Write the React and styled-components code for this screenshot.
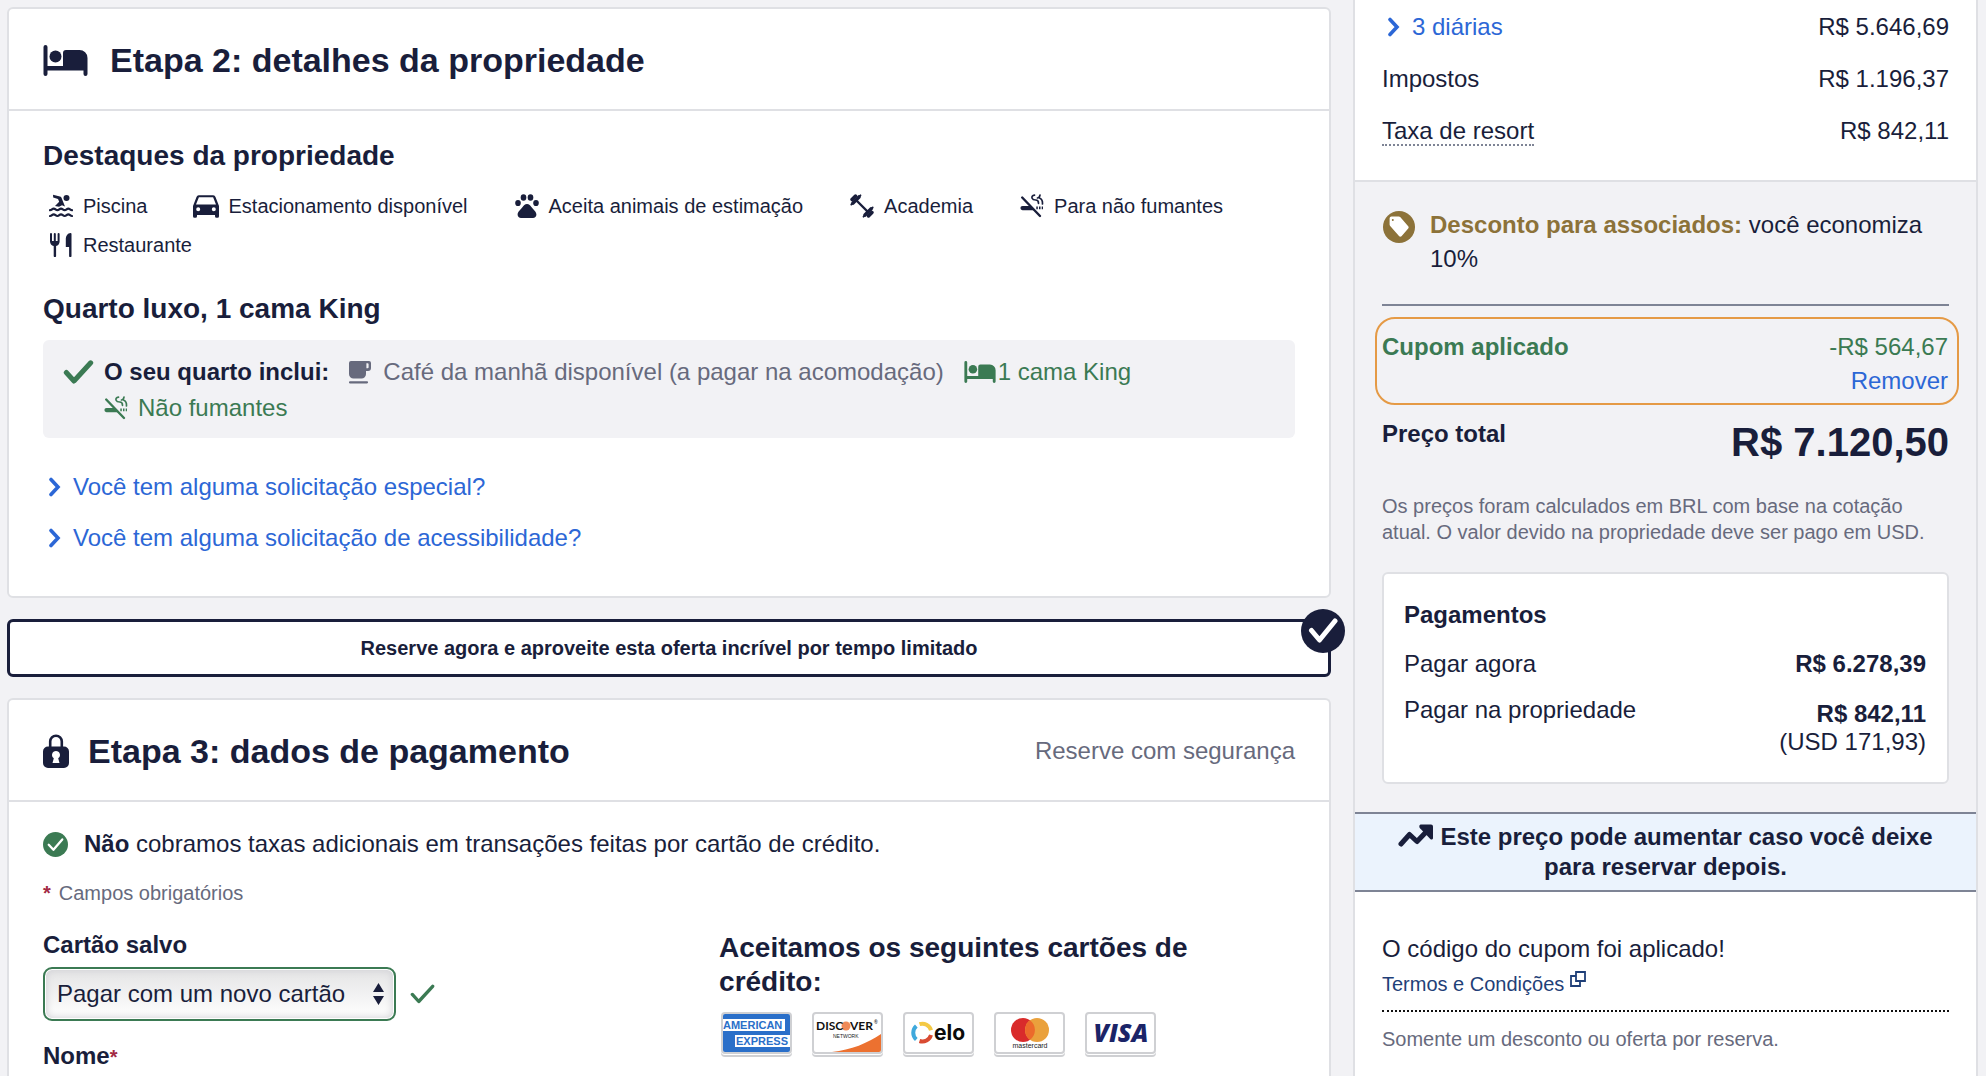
import React from 'react'
import styled, { createGlobalStyle } from 'styled-components'

const colors = {
    navy: '#191e3b',
    blue: '#2c67d6',
    link: '#1f3f78',
    green: '#3b7a53',
    gray: '#676a7d',
    gold: '#8c7239',
    red: '#a32a44',
    orange: '#e59a45',
    border: '#dfe0e4',
    rule: '#7e8495',
    bg: '#f2f2f5',
    white: '#fff',
}

const GlobalStyle = createGlobalStyle`
    *, *::before, *::after {
        box-sizing: border-box;
    }
    body {
        margin: 0;
        background: ${colors.bg};
        color: ${colors.navy};
        font-family: 'Liberation Sans', Arial, sans-serif;
        font-size: 24px;
        line-height: 30px;
    }
    h1, h2, h3, p, ul, dl, dd {
        margin: 0;
        padding: 0;
    }
`

/* ---------- icons ---------- */

const Svg = styled.svg`
    display: block;
    flex: none;
    fill: currentColor;
`

const BedIcon = ({ size = 44 }) => (
    <Svg width={size} height={Math.round(size * 0.7)} viewBox="0 0 44 31">
        <path d="M0 2a2 2 0 0 1 4 0v19h15.500V8a3 3 0 0 1 3-3H36a8 8 0 0 1 8 8v16a2 2 0 0 1-4 0v-3.500H4V29a2 2 0 0 1-4 0z" />
        <circle cx="12" cy="11.500" r="6" />
    </Svg>
)

const SwimIcon = () => (
    <Svg width="24" height="24" viewBox="0 0 24 24">
        <circle cx="17.500" cy="4" r="3" />
        <path d="M4 .8 11 2.600c1 .3 1.500 1 1.800 1.800L16 12.500l-3-1.300-3 1.500-4-.7 4.200-4.200L9 5 4.200 3.400z" />
        <g fill="none" stroke="currentColor" strokeWidth="2.200" strokeLinecap="round">
            <path d="M1 16.200c2 0 2-1.600 3.700-1.600s2 1.600 3.700 1.600 2-1.600 3.600-1.600 2 1.600 3.700 1.600 2-1.600 3.600-1.600 2 1.600 3.700 1.600" />
            <path d="M1 22c2 0 2-1.600 3.700-1.600S6.700 22 8.400 22s2-1.600 3.600-1.600 2 1.600 3.700 1.600 2-1.600 3.600-1.600S21.300 22 23 22" />
        </g>
    </Svg>
)

const CarIcon = () => (
    <Svg width="26" height="24" viewBox="0 0 26 24">
        <path
            fillRule="evenodd"
            d="M5.800 1.200h14.400a2.400 2.400 0 0 1 2.300 1.700L26 12v10.200a1.500 1.500 0 0 1-1.500 1.500h-1a1.500 1.500 0 0 1-1.500-1.500V21H4v1.200a1.500 1.500 0 0 1-1.500 1.500h-1A1.500 1.500 0 0 1 0 22.200V12l3.500-9.100a2.400 2.400 0 0 1 2.300-1.700zM5.900 3.300 3 10.500h20l-2.900-7.200zM5.200 13.300a2 2 0 1 0 0 4 2 2 0 0 0 0-4zm15.600 0a2 2 0 1 0 0 4 2 2 0 0 0 0-4z"
        />
    </Svg>
)

const PawIcon = () => (
    <Svg width="24" height="24" viewBox="0 0 24 24">
        <ellipse cx="3" cy="9" rx="2.800" ry="3.100" />
        <ellipse cx="8.500" cy="3.500" rx="2.800" ry="3.200" />
        <ellipse cx="15.500" cy="3.500" rx="2.800" ry="3.200" />
        <ellipse cx="21" cy="9" rx="2.800" ry="3.100" />
        <path d="M12 10c2.200 0 3.300 1.500 4.600 3.200 1.600 2.200 4.800 4.400 4.800 7.300 0 2.300-1.600 3.500-3.400 3.500H6c-1.800 0-3.400-1.200-3.400-3.500 0-2.900 3.200-5.100 4.800-7.300C8.700 11.500 9.800 10 12 10z" />
    </Svg>
)

const DumbbellIcon = () => (
    <Svg width="24" height="24" viewBox="0 0 24 24">
        <g fill="none" stroke="currentColor" strokeLinecap="round">
            <path strokeWidth="2.400" d="m6 6 12 12" />
            <path strokeWidth="3.600" d="m3 9 6-6M15 21l6-6" />
            <path strokeWidth="3.400" d="m2 5.500 3.500-3.500M18.500 22l3.500-3.500" />
            <path strokeWidth="1.800" d="M1.300 10.500 10.500 1.300M13.500 22.700l9.200-9.200" />
        </g>
    </Svg>
)

const NoSmokingIcon = () => (
    <Svg width="24" height="24" viewBox="0 0 24 24">
        <path d="M2.500 12h7.800l4.200 4.200h-12a2.100 2.100 0 0 1 0-4.200zM16.300 12.500h1.500v2.800h-1.500zM19 12.500h1.500v2.800H19zM21.700 12.500h1.300v2.800h-1.300z" />
        <g fill="none" stroke="currentColor" strokeLinecap="round">
            <path strokeWidth="2.400" d="M2.200 3.500 20 22" />
            <path strokeWidth="1.700" d="M14.500 1.200c-2.200.3-3 1.600-2.400 3 .6 1.500 2 1.800 3.600 1.800 2 0 2.800.9 2.800 3.300M20 1c-.2 1.800-1 2.700-2.500 3M19.500 4c2.300.8 3.200 2.500 3 6" />
        </g>
    </Svg>
)

const CutleryIcon = () => (
    <Svg width="24" height="24" viewBox="0 0 24 24">
        <path d="M1 1a1 1 0 0 1 2 0v7h1.800V1a1 1 0 0 1 2 0v7h1.800V1a1 1 0 0 1 2 0v7.500c0 2.300-1.500 4-3.500 4.500v10a1.200 1.200 0 0 1-2.400 0V13C2.500 12.500 1 10.800 1 8.500zM22.500 1v22a1.200 1.200 0 0 1-2.400 0v-9h-3.300V6c0-3 2-6 4.800-6a1 1 0 0 1 .9 1z" />
    </Svg>
)

const CupIcon = () => (
    <Svg width="22" height="24" viewBox="0 0 22 24">
        <path
            fillRule="evenodd"
            d="M0 3a2 2 0 0 1 2-2h18a2 2 0 0 1 2 2v5a3 3 0 0 1-3 3h-2v3a4.500 4.500 0 0 1-4.500 4.500h-8A4.500 4.500 0 0 1 0 14zM17.400 3.200v5h1.200a1 1 0 0 0 1-1v-3a1 1 0 0 0-1-1z"
        />
        <path d="M1 21.200h17a1 1 0 0 1 0 2.200H1a1 1 0 0 1 0-2.200z" />
    </Svg>
)

const CheckIcon = ({ width = 30, height = 24, stroke = 5 }) => (
    <Svg width={width} height={height} viewBox="0 0 30 24">
        <path
            d="m2.800 12.500 7.700 8.500L27.200 2.800"
            fill="none"
            stroke="currentColor"
            strokeWidth={stroke}
            strokeLinecap="round"
            strokeLinejoin="round"
        />
    </Svg>
)

const BadgeCheckIcon = () => (
    <Svg width="30" height="28" viewBox="0 0 30 28">
        <path
            d="m3.500 13.500 8 9.500L27 4"
            fill="none"
            stroke="currentColor"
            strokeWidth="5"
            strokeLinecap="round"
            strokeLinejoin="round"
        />
    </Svg>
)

const ChevronIcon = () => (
    <Svg width="14" height="20" viewBox="0 0 14 20">
        <path d="m3 2.500 7 7.500-7 7.500" fill="none" stroke="currentColor" strokeWidth="3.600" strokeLinecap="round" />
    </Svg>
)

const LockIcon = () => (
    <Svg width="26" height="35" viewBox="0 0 26 35">
        <path d="M7.200 14V7.500a5.800 5.800 0 0 1 11.600 0V14" fill="none" stroke="currentColor" strokeWidth="2.600" />
        <path
            fillRule="evenodd"
            d="M5 12.500h16a5 5 0 0 1 5 5V29a5 5 0 0 1-5 5H5a5 5 0 0 1-5-5V17.500a5 5 0 0 1 5-5zm8 4.500a4 4 0 0 0-2.200 7.300L9.500 29h7l-1.300-4.700A4 4 0 0 0 13 17z"
        />
    </Svg>
)

const CircleCheckIcon = ({ size }) => (
    <Svg width={size} height={size} viewBox="0 0 24 24">
        <circle cx="12" cy="12" r="12" />
        <path
            d="m5.500 12.300 4.500 4.800 8.500-10"
            fill="none"
            stroke={colors.white}
            strokeWidth="2.200"
            strokeLinecap="round"
            strokeLinejoin="round"
        />
    </Svg>
)

const TagIcon = () => (
    <Svg width="34" height="40" viewBox="0 0 34 40">
        <circle cx="17" cy="19" r="16" />
        <path
            fill={colors.white}
            fillRule="evenodd"
            d="M9.500 8.500h7.200c.6 0 1.100.2 1.500.6l8 9.100c.6.700.6 1.600 0 2.300L19.500 28.300c-.7.600-1.700.6-2.300 0L8.200 18a2 2 0 0 1-.6-1.400v-6.200c0-1 .9-1.900 1.900-1.900zm1.300 2.600a1 1 0 1 0 0 2 1 1 0 0 0 0-2z"
        />
    </Svg>
)

const TrendIcon = styled(({ className }) => (
    <svg className={className} width="36" height="24" viewBox="0 0 36 24" aria-hidden="true">
        <path d="m3 20 8.500-9.500 7.500 7L30 6" fill="none" stroke="currentColor" strokeWidth="5" strokeLinecap="round" strokeLinejoin="round" />
        <path d="M23 .5h10a2 2 0 0 1 2 2V14c0 1.500-1.600 2-2.700 1L22 4.200C20.700 2.800 21.300.5 23 .5z" fill="currentColor" />
    </svg>
))`
    margin-right: 6px;
`

const WindowsIcon = () => (
    <Svg width="16" height="16" viewBox="0 0 16 16">
        <path d="M6 1h9v9H6zM6 5H1v10h9v-5" fill="none" stroke="currentColor" strokeWidth="1.800" />
    </Svg>
)

/* ---------- card brands ---------- */

const CardSvg = styled.svg`
    display: block;
    border: 2px solid #cfd0d3;
    border-radius: 4px;
    background: ${colors.white};
    box-shadow: 0 1px 0 ${colors.white}, 0 3px 0 #cfd0d3;
    font-family: 'Liberation Sans', Arial, sans-serif;
    font-weight: 700;
`

const Amex = () => (
    <CardSvg width="71" height="42" viewBox="0 0 67 38" role="img" aria-label="American Express">
        <rect width="67" height="38" fill="#2a6fc9" />
        <path d="M0 5h62v12H0zM12 21h55v12H12z" fill="#fff" />
        <g fill="#2a6fc9" fontSize="11">
            <text x="0" y="15">AMERICAN</text>
            <text x="13" y="31">EXPRESS</text>
        </g>
    </CardSvg>
)

const Discover = () => (
    <CardSvg width="71" height="42" viewBox="0 0 67 38" role="img" aria-label="Discover Network">
        <path d="M67 20v18H18c19-2 36-9 49-18z" fill="#ec7130" />
        <circle cx="32" cy="12" r="4.500" fill="#f08a58" />
        <g fill="#111" fontSize="12" fontFamily="Lato, sans-serif">
            <text x="2" y="16">DISC</text>
            <text x="36" y="16">VER</text>
        </g>
        <text x="60" y="10" fontSize="5" fill="#333">®</text>
        <text x="19" y="24" fontSize="5" fontWeight="400" fill="#222">NETWORK</text>
    </CardSvg>
)

const Elo = () => (
    <CardSvg width="71" height="42" viewBox="0 0 67 38" role="img" aria-label="Elo">
        <g fill="none" strokeWidth="4">
            <path d="M14.500 10.200a9 9 0 0 1 11.500 6" stroke="#f4c944" />
            <path d="M26 21a9 9 0 0 1-11.500 6" stroke="#d94b32" />
            <path d="M11.300 25.500a9 9 0 0 1 0-13.500" stroke="#3fa9dc" />
        </g>
        <text x="29" y="26" fontSize="21" fontFamily="Inter, sans-serif" fill="#0b0b0b">elo</text>
    </CardSvg>
)

const Mastercard = () => (
    <CardSvg width="71" height="42" viewBox="0 0 67 38" role="img" aria-label="Mastercard">
        <circle cx="27" cy="16" r="12" fill="#d92b2b" />
        <circle cx="41" cy="16" r="12" fill="#eaa13c" />
        <path d="M34 6.300a12 12 0 0 1 0 19.400 12 12 0 0 1 0-19.400z" fill="#ec6a2b" />
        <text x="34" y="34" fontSize="7" fontWeight="400" textAnchor="middle" fill="#222">mastercard</text>
    </CardSvg>
)

const Visa = () => (
    <CardSvg width="71" height="42" viewBox="0 0 67 38" role="img" aria-label="Visa">
        <text
            x="34"
            y="28"
            fontFamily="'Open Sans', sans-serif"
            fontSize="25"
            fontWeight="800"
            fontStyle="italic"
            textAnchor="middle"
            fill="#1b2468"
        >
            VISA
        </text>
    </CardSvg>
)

/* ---------- layout ---------- */

const Page = styled.div`
    min-height: 100vh;
    padding: 0 8px 0 7px;
    display: grid;
    grid-template-columns: minmax(0, 1324fr) minmax(0, 625fr);
    gap: 22px;
`

const Main = styled.main`
    padding-top: 7px;
    display: flex;
    flex-direction: column;
    gap: 21px;
`

const Card = styled.section`
    background: ${colors.white};
    border: 2px solid ${colors.border};
    border-radius: 6px;
    ${({ $open }) => $open && `
        flex: 1;
        border-bottom: 0;
        border-radius: 6px 6px 0 0;
    `}
`

const CardHeader = styled.header`
    display: flex;
    align-items: center;
    gap: ${({ $gap }) => $gap};
    min-height: 102px;
    padding: 2px 34px 0;
    border-bottom: 2px solid ${colors.border};
`

const Title = styled.h1`
    font-size: 34px;
    line-height: 40px;
`

const HeaderNote = styled.span`
    margin-left: auto;
    color: ${colors.gray};
`

const CardBody = styled.div`
    padding: 27px 34px ${({ $bottom }) => $bottom || '0'};
`

const Heading = styled.h2`
    font-size: 28px;
    line-height: 36px;
`

const Amenities = styled.ul`
    list-style: none;
    display: flex;
    flex-wrap: wrap;
    gap: 15px 45px;
    margin: 20px 0 34px;
    padding: 0 4px;
    font-size: 20px;
    line-height: 24px;
`

const Amenity = styled.li`
    display: flex;
    align-items: center;
    gap: 8px;
`

const AmenityIcon = styled.span`
    width: 28px;
    display: flex;
    justify-content: center;
`

const Includes = styled.div`
    display: flex;
    gap: 10px;
    margin: 13px 0 34px;
    padding: 14px 20px 12px;
    border-radius: 6px;
    background: ${colors.bg};
    line-height: 36px;
`

const IncludesMark = styled.span`
    height: 36px;
    display: flex;
    align-items: center;
    color: ${colors.green};
`

const IncludesList = styled.div`
    flex: 1;
    display: flex;
    flex-wrap: wrap;
    column-gap: 20px;
`

const Feature = styled.span`
    display: flex;
    align-items: center;
    gap: ${({ $gap }) => $gap || '12px'};
    color: ${({ $muted }) => ($muted ? colors.gray : colors.green)};
`

const TextButton = styled.button`
    padding: 0;
    border: 0;
    background: none;
    color: ${colors.blue};
    font: inherit;
    cursor: pointer;
`

const ExpandButton = styled(TextButton)`
    display: flex;
    align-items: center;
    gap: 11px;
    padding-left: 5px;
`

const Requests = styled.div`
    display: flex;
    flex-direction: column;
    align-items: flex-start;
    gap: 21px;
`

const Offer = styled.div`
    position: relative;
    padding: 12px;
    border: 3px solid ${colors.navy};
    border-radius: 6px;
    background: ${colors.white};
    font-size: 20px;
    font-weight: 700;
    line-height: 28px;
    text-align: center;
`

const OfferBadge = styled.span`
    position: absolute;
    top: -13px;
    right: -17px;
    width: 44px;
    height: 44px;
    display: flex;
    align-items: center;
    justify-content: center;
    border-radius: 50%;
    background: ${colors.navy};
    color: ${colors.white};
`

const NoFee = styled.p`
    display: flex;
    align-items: center;
    gap: 16px;
`

const GreenMark = styled.span`
    color: ${colors.green};
`

const Required = styled.p`
    display: flex;
    gap: 8px;
    margin: 21px 0 25px;
    color: ${colors.gray};
    font-size: 20px;
    line-height: 26px;
`

const Star = styled.span`
    color: ${colors.red};
    font-size: 20px;
    font-weight: 700;
`

const Columns = styled.div`
    display: grid;
    grid-template-columns: 54% 46%;
`

const Label = styled.label`
    display: block;
    font-weight: 700;
    line-height: 28px;
`

const SelectRow = styled.div`
    display: flex;
    align-items: center;
    gap: 14px;
    margin: 8px 0 21px;
    color: ${colors.green};
`

const SelectBox = styled.div`
    position: relative;
    color: ${colors.navy};
`

const Select = styled.select`
    appearance: none;
    display: block;
    height: 54px;
    padding: 0 48px 0 12px;
    border: 2px solid ${colors.green};
    border-radius: 9px;
    background: linear-gradient(#e4e4e5, #fff);
    box-shadow: inset 0 0 0 1px #fff, inset 0 0 7px 2px #d4d4d8;
    color: inherit;
    font: inherit;
`

const SelectArrows = styled.svg`
    position: absolute;
    top: 15px;
    right: 12px;
    fill: currentColor;
    pointer-events: none;
`

const CardBrandsTitle = styled.h3`
    font-size: 28px;
    line-height: 34px;
`

const CardBrands = styled.div`
    display: flex;
    gap: 20px;
    margin-top: 13px;
    padding-left: 2px;
`

const Summary = styled.aside`
    border: solid ${colors.border};
    border-width: 0 2px;
    background: ${colors.white};
`

const PriceList = styled.dl`
    display: flex;
    flex-direction: column;
    gap: 22px;
    padding: 12px 27px 34px;
`

const Row = styled.div`
    display: flex;
    justify-content: space-between;
    align-items: flex-start;
`

const Explained = styled.span`
    display: block;
    height: 30px;
    border-bottom: 2px dotted ${colors.rule};
`

const Totals = styled.div`
    padding: 26px 27px 28px;
    border-top: 2px solid ${colors.border};
    background: ${colors.bg};
`

const Member = styled.p`
    display: flex;
    gap: 14px;
    padding-bottom: 28px;
    border-bottom: 2px solid ${colors.rule};
    line-height: 34px;
    color: ${colors.gold};
`

const MemberText = styled.span`
    color: ${colors.navy};

    strong {
        color: ${colors.gold};
    }
`

const Coupon = styled.div`
    display: flex;
    justify-content: space-between;
    margin: 11px -10px 14px -7px;
    padding: 11px 9px 5px 5px;
    border: 2px solid ${colors.orange};
    border-radius: 20px;
    color: ${colors.green};
    line-height: 34px;
`

const CouponValue = styled.div`
    display: flex;
    flex-direction: column;
    align-items: flex-end;
`

const Total = styled.strong`
    font-size: 40px;
    line-height: 46px;
`

const Small = styled.p`
    color: ${colors.gray};
    font-size: 20px;
    line-height: 26px;
`

const PriceNote = styled(Small)`
    margin: 28px 0 27px;
`

const Payments = styled.div`
    padding: 27px 21px 26px 20px;
    border: 2px solid ${colors.border};
    border-radius: 6px;
    background: ${colors.white};
    line-height: 28px;
`

const PaymentsTitle = styled.h3`
    margin-bottom: 21px;
    font-size: 24px;
    line-height: 28px;
`

const PaymentRow = styled(Row)`
    & + & {
        margin-top: 18px;
    }
`

const PaymentValue = styled.dd`
    padding-top: ${({ $low }) => ($low ? '4px' : '0')};
    text-align: right;
`

const PriceAlert = styled.p`
    padding: 8px 32px;
    border: solid ${colors.rule};
    border-width: 2px 0;
    background: #ebf3fd;
    font-weight: 700;
    text-align: center;

    svg {
        vertical-align: -3px;
    }
`

const CouponInfo = styled.div`
    padding: 42px 27px 0;
`

const Terms = styled.a`
    display: flex;
    gap: 6px;
    margin: 7px 0 14px;
    padding-bottom: 13px;
    border-bottom: 2px dotted #111;
    color: ${colors.link};
    font-size: 20px;
    line-height: 26px;
    text-decoration: none;
`

const amenities = [
    { icon: <SwimIcon />, name: 'Piscina' },
    { icon: <CarIcon />, name: 'Estacionamento disponível' },
    { icon: <PawIcon />, name: 'Aceita animais de estimação' },
    { icon: <DumbbellIcon />, name: 'Academia' },
    { icon: <NoSmokingIcon />, name: 'Para não fumantes' },
    { icon: <CutleryIcon />, name: 'Restaurante' },
]

const PropertyDetails = () => (
    <Card>
        <CardHeader $gap="22px">
            <BedIcon size={45} />
            <Title>Etapa 2: detalhes da propriedade</Title>
        </CardHeader>
        <CardBody $bottom="43px">
            <Heading>Destaques da propriedade</Heading>
            <Amenities>
                {amenities.map(({ icon, name }) => (
                    <Amenity key={name}>
                        <AmenityIcon>{icon}</AmenityIcon>
                        {name}
                    </Amenity>
                ))}
            </Amenities>
            <Heading>Quarto luxo, 1 cama King</Heading>
            <Includes>
                <IncludesMark><CheckIcon width={31} height={24} /></IncludesMark>
                <IncludesList>
                    <strong>O seu quarto inclui:</strong>
                    <Feature $muted><CupIcon />Café da manhã disponível (a pagar na acomodação)</Feature>
                    <Feature $gap="2px"><BedIcon size={32} />1 cama King</Feature>
                    <Feature $gap="10px"><NoSmokingIcon />Não fumantes</Feature>
                </IncludesList>
            </Includes>
            <Requests>
                <ExpandButton type="button"><ChevronIcon />Você tem alguma solicitação especial?</ExpandButton>
                <ExpandButton type="button"><ChevronIcon />Você tem alguma solicitação de acessibilidade?</ExpandButton>
            </Requests>
        </CardBody>
    </Card>
)

const PaymentDetails = () => (
    <Card $open>
        <CardHeader $gap="19px">
            <LockIcon />
            <Title>Etapa 3: dados de pagamento</Title>
            <HeaderNote>Reserve com segurança</HeaderNote>
        </CardHeader>
        <CardBody>
            <NoFee>
                <GreenMark><CircleCheckIcon size={25} /></GreenMark>
                <span><strong>Não</strong> cobramos taxas adicionais em transações feitas por cartão de crédito.</span>
            </NoFee>
            <Required><Star>*</Star> Campos obrigatórios</Required>
            <Columns>
                <div>
                    <Label htmlFor="saved-card">Cartão salvo</Label>
                    <SelectRow>
                        <SelectBox>
                            <Select id="saved-card">
                                <option>Pagar com um novo cartão</option>
                            </Select>
                            <SelectArrows width="11" height="24" viewBox="0 0 11 24">
                                <path d="M5.500 1 11 10H0zM5.500 23 0 14h11z" />
                            </SelectArrows>
                        </SelectBox>
                        <CheckIcon width={25} height={20} stroke={4} />
                    </SelectRow>
                    <Label as="p">Nome<Star>*</Star></Label>
                </div>
                <div>
                    <CardBrandsTitle>Aceitamos os seguintes cartões de crédito:</CardBrandsTitle>
                    <CardBrands>
                        <Amex />
                        <Discover />
                        <Elo />
                        <Mastercard />
                        <Visa />
                    </CardBrands>
                </div>
            </Columns>
        </CardBody>
    </Card>
)

const PriceSummary = () => (
    <Summary>
        <PriceList>
            <Row>
                <dt><ExpandButton type="button"><ChevronIcon />3 diárias</ExpandButton></dt>
                <dd>R$ 5.646,69</dd>
            </Row>
            <Row>
                <dt>Impostos</dt>
                <dd>R$ 1.196,37</dd>
            </Row>
            <Row>
                <dt><Explained>Taxa de resort</Explained></dt>
                <dd>R$ 842,11</dd>
            </Row>
        </PriceList>
        <Totals>
            <Member>
                <TagIcon />
                <MemberText><strong>Desconto para associados:</strong> você economiza 10%</MemberText>
            </Member>
            <Coupon>
                <strong>Cupom aplicado</strong>
                <CouponValue>
                    <span>-R$ 564,67</span>
                    <TextButton type="button">Remover</TextButton>
                </CouponValue>
            </Coupon>
            <Row>
                <strong>Preço total</strong>
                <Total>R$ 7.120,50</Total>
            </Row>
            <PriceNote>
                Os preços foram calculados em BRL com base na cotação atual. O valor devido na propriedade deve ser pago em USD.
            </PriceNote>
            <Payments>
                <PaymentsTitle>Pagamentos</PaymentsTitle>
                <dl>
                    <PaymentRow>
                        <dt>Pagar agora</dt>
                        <PaymentValue><strong>R$ 6.278,39</strong></PaymentValue>
                    </PaymentRow>
                    <PaymentRow>
                        <dt>Pagar na propriedade</dt>
                        <PaymentValue $low>
                            <strong>R$ 842,11</strong>
                            <br />
                            (USD 171,93)
                        </PaymentValue>
                    </PaymentRow>
                </dl>
            </Payments>
        </Totals>
        <PriceAlert>
            <TrendIcon />
            Este preço pode aumentar caso você deixe para reservar depois.
        </PriceAlert>
        <CouponInfo>
            <p>O código do cupom foi aplicado!</p>
            <Terms href="#termos">Termos e Condições<WindowsIcon /></Terms>
            <Small>Somente um desconto ou oferta por reserva.</Small>
        </CouponInfo>
    </Summary>
)

const App = () => {
    return (
        <>
            <GlobalStyle />
            <Page>
                <Main>
                    <PropertyDetails />
                    <Offer>
                        Reserve agora e aproveite esta oferta incrível por tempo limitado
                        <OfferBadge><BadgeCheckIcon /></OfferBadge>
                    </Offer>
                    <PaymentDetails />
                </Main>
                <PriceSummary />
            </Page>
        </>
    )
}

export default App
